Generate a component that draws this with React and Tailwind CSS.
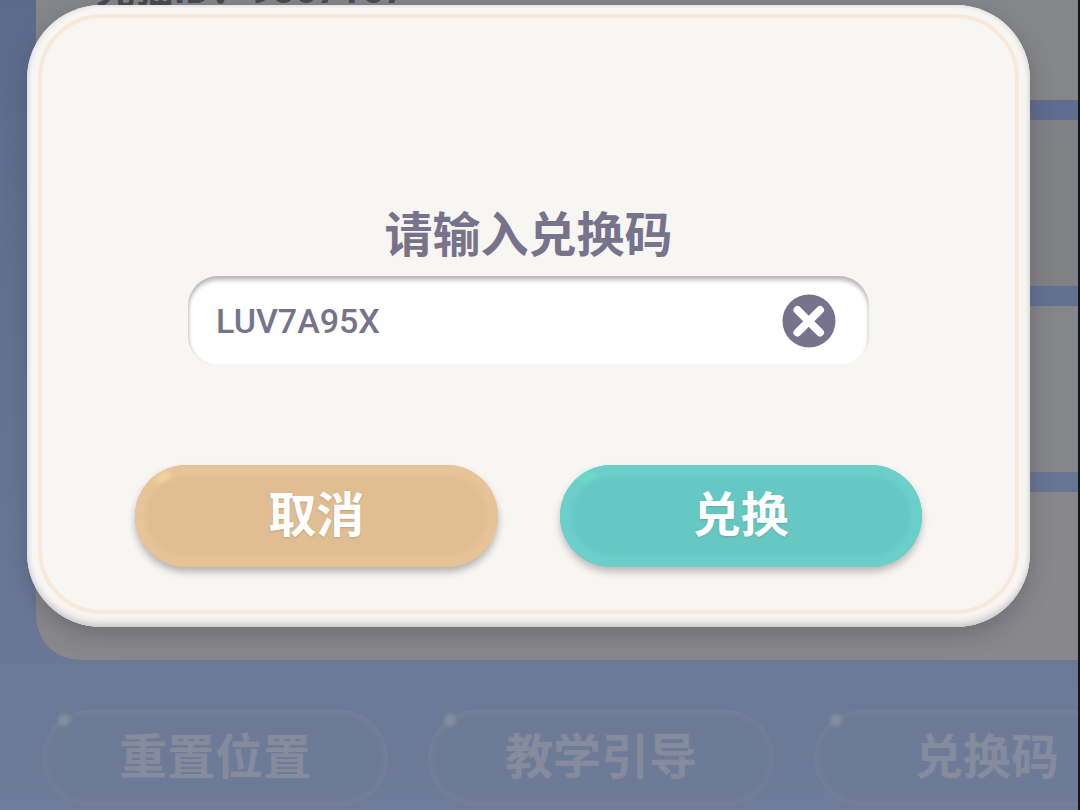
import { useState } from "react";
import clsx from "clsx";

const menuItems = ["重置位置", "教学引导", "兑换码"];

function ClearIcon() {
  return (
    <svg viewBox="0 0 54 54" className="size-[54px]" aria-hidden="true">
      <circle cx="27" cy="27" r="26.5" fill="#77738c" />
      <path
        d="M15.5 16 38 38.5M38 16 15.5 38.5"
        stroke="#fff"
        strokeWidth="8"
        strokeLinecap="round"
      />
    </svg>
  );
}

function PillButton({ tone, children, ...props }) {
  const gold = tone === "gold";
  return (
    <button
      className={clsx(
        "relative flex h-[102px] flex-1 items-center justify-center rounded-full text-5xl font-bold text-white",
        gold
          ? "bg-[#e0be92] shadow-[inset_0_0_4px_11px_#e6c497,0_5px_7px_rgba(90,80,90,0.4)]"
          : "bg-[#66c8c2] shadow-[inset_0_0_4px_11px_#6dcfc9,0_5px_7px_rgba(90,80,90,0.35)]"
      )}
      {...props}
    >
      <span
        className={clsx(
          "absolute top-2 left-5 h-2 w-4 -rotate-30 rounded-full blur-[2px]",
          gold ? "bg-[#efd59c]" : "bg-[#68dcc8]"
        )}
      />
      <span className="[text-shadow:0_1px_2px_rgba(80,80,80,0.25)]">{children}</span>
    </button>
  );
}

function SettingsPage() {
  return (
    <div className="flex flex-col pl-9">
      <div className="flex flex-col gap-5">
        <section className="h-[100px] bg-[#858688] pl-[60px]">
          <p className="-mt-[30px] text-[39px] leading-10 font-bold text-[#49494d]">
            光猫ID：9867167
          </p>
        </section>
        <section className="h-[166px] bg-[#818285]" />
        <section className="h-[166px] bg-[#858689]" />
        <section className="h-[168px] rounded-bl-[44px] bg-[#88888b]" />
      </div>
      <nav className="mt-[50px] flex gap-10 pl-[6px]">
        {menuItems.map((item) => (
          <button
            key={item}
            className="relative h-24 w-[346px] shrink-0 rounded-full bg-[#6e7b98] text-5xl font-bold text-[#858a9c] shadow-[inset_0_0_5px_4px_#757f9b]"
          >
            <span className="absolute top-1 left-4 size-3 rounded-full bg-[#8090a0] blur-[2px]" />
            {item}
          </button>
        ))}
      </nav>
    </div>
  );
}

function RedeemDialog() {
  const [code, setCode] = useState("LUV7A95X");

  return (
    <form
      role="dialog"
      aria-labelledby="redeem-title"
      onSubmit={(e) => e.preventDefault()}
      className="w-full rounded-[74px] bg-[#f7f6f2] px-[11px] pt-[9px] pb-[13px] shadow-[inset_0_-7px_7px_-3px_#cfcccd,inset_2px_0_4px_#e2dfe6,inset_-2px_0_4px_#e2dfe0,0_8px_22px_rgba(60,60,80,0.35)]"
    >
      <div className="rounded-[64px] border-4 border-[#f8eadb] bg-[#f7f6f2] px-[93px] pt-[190px] pb-[43px]">
        <div className="flex flex-col px-[53px]">
          <label
            id="redeem-title"
            htmlFor="redeem-code"
            className="text-center text-5xl leading-[56px] font-bold text-[#77738c]"
          >
            请输入兑换码
          </label>
          <div className="mt-3 flex h-[90px] items-center rounded-[30px] bg-white pr-[33px] pl-7 shadow-[inset_0_4px_4px_#b9b6b9,inset_1px_0_3px_#e4e2e2]">
            <input
              id="redeem-code"
              value={code}
              onChange={(e) => setCode(e.target.value)}
              className="min-w-0 flex-1 bg-transparent text-[34px] font-medium text-[#77738c] outline-none"
            />
            <button type="button" aria-label="清除" onClick={() => setCode("")}>
              <ClearIcon />
            </button>
          </div>
        </div>
        <div className="mt-[99px] flex gap-[62px]">
          <PillButton type="button" tone="gold">
            取消
          </PillButton>
          <PillButton type="submit" tone="teal">
            兑换
          </PillButton>
        </div>
      </div>
    </form>
  );
}

export default function App() {
  return (
    <div className="relative h-screen overflow-hidden border-r-2 border-[#15161c] bg-linear-to-b from-[#5c6b8c] to-[#6e7b99] font-['Roboto','Noto_Sans_CJK_SC',sans-serif]">
      <SettingsPage />
      <div className="absolute inset-0 pt-[5px] pr-12 pl-[27px]">
        <RedeemDialog />
      </div>
    </div>
  );
}
